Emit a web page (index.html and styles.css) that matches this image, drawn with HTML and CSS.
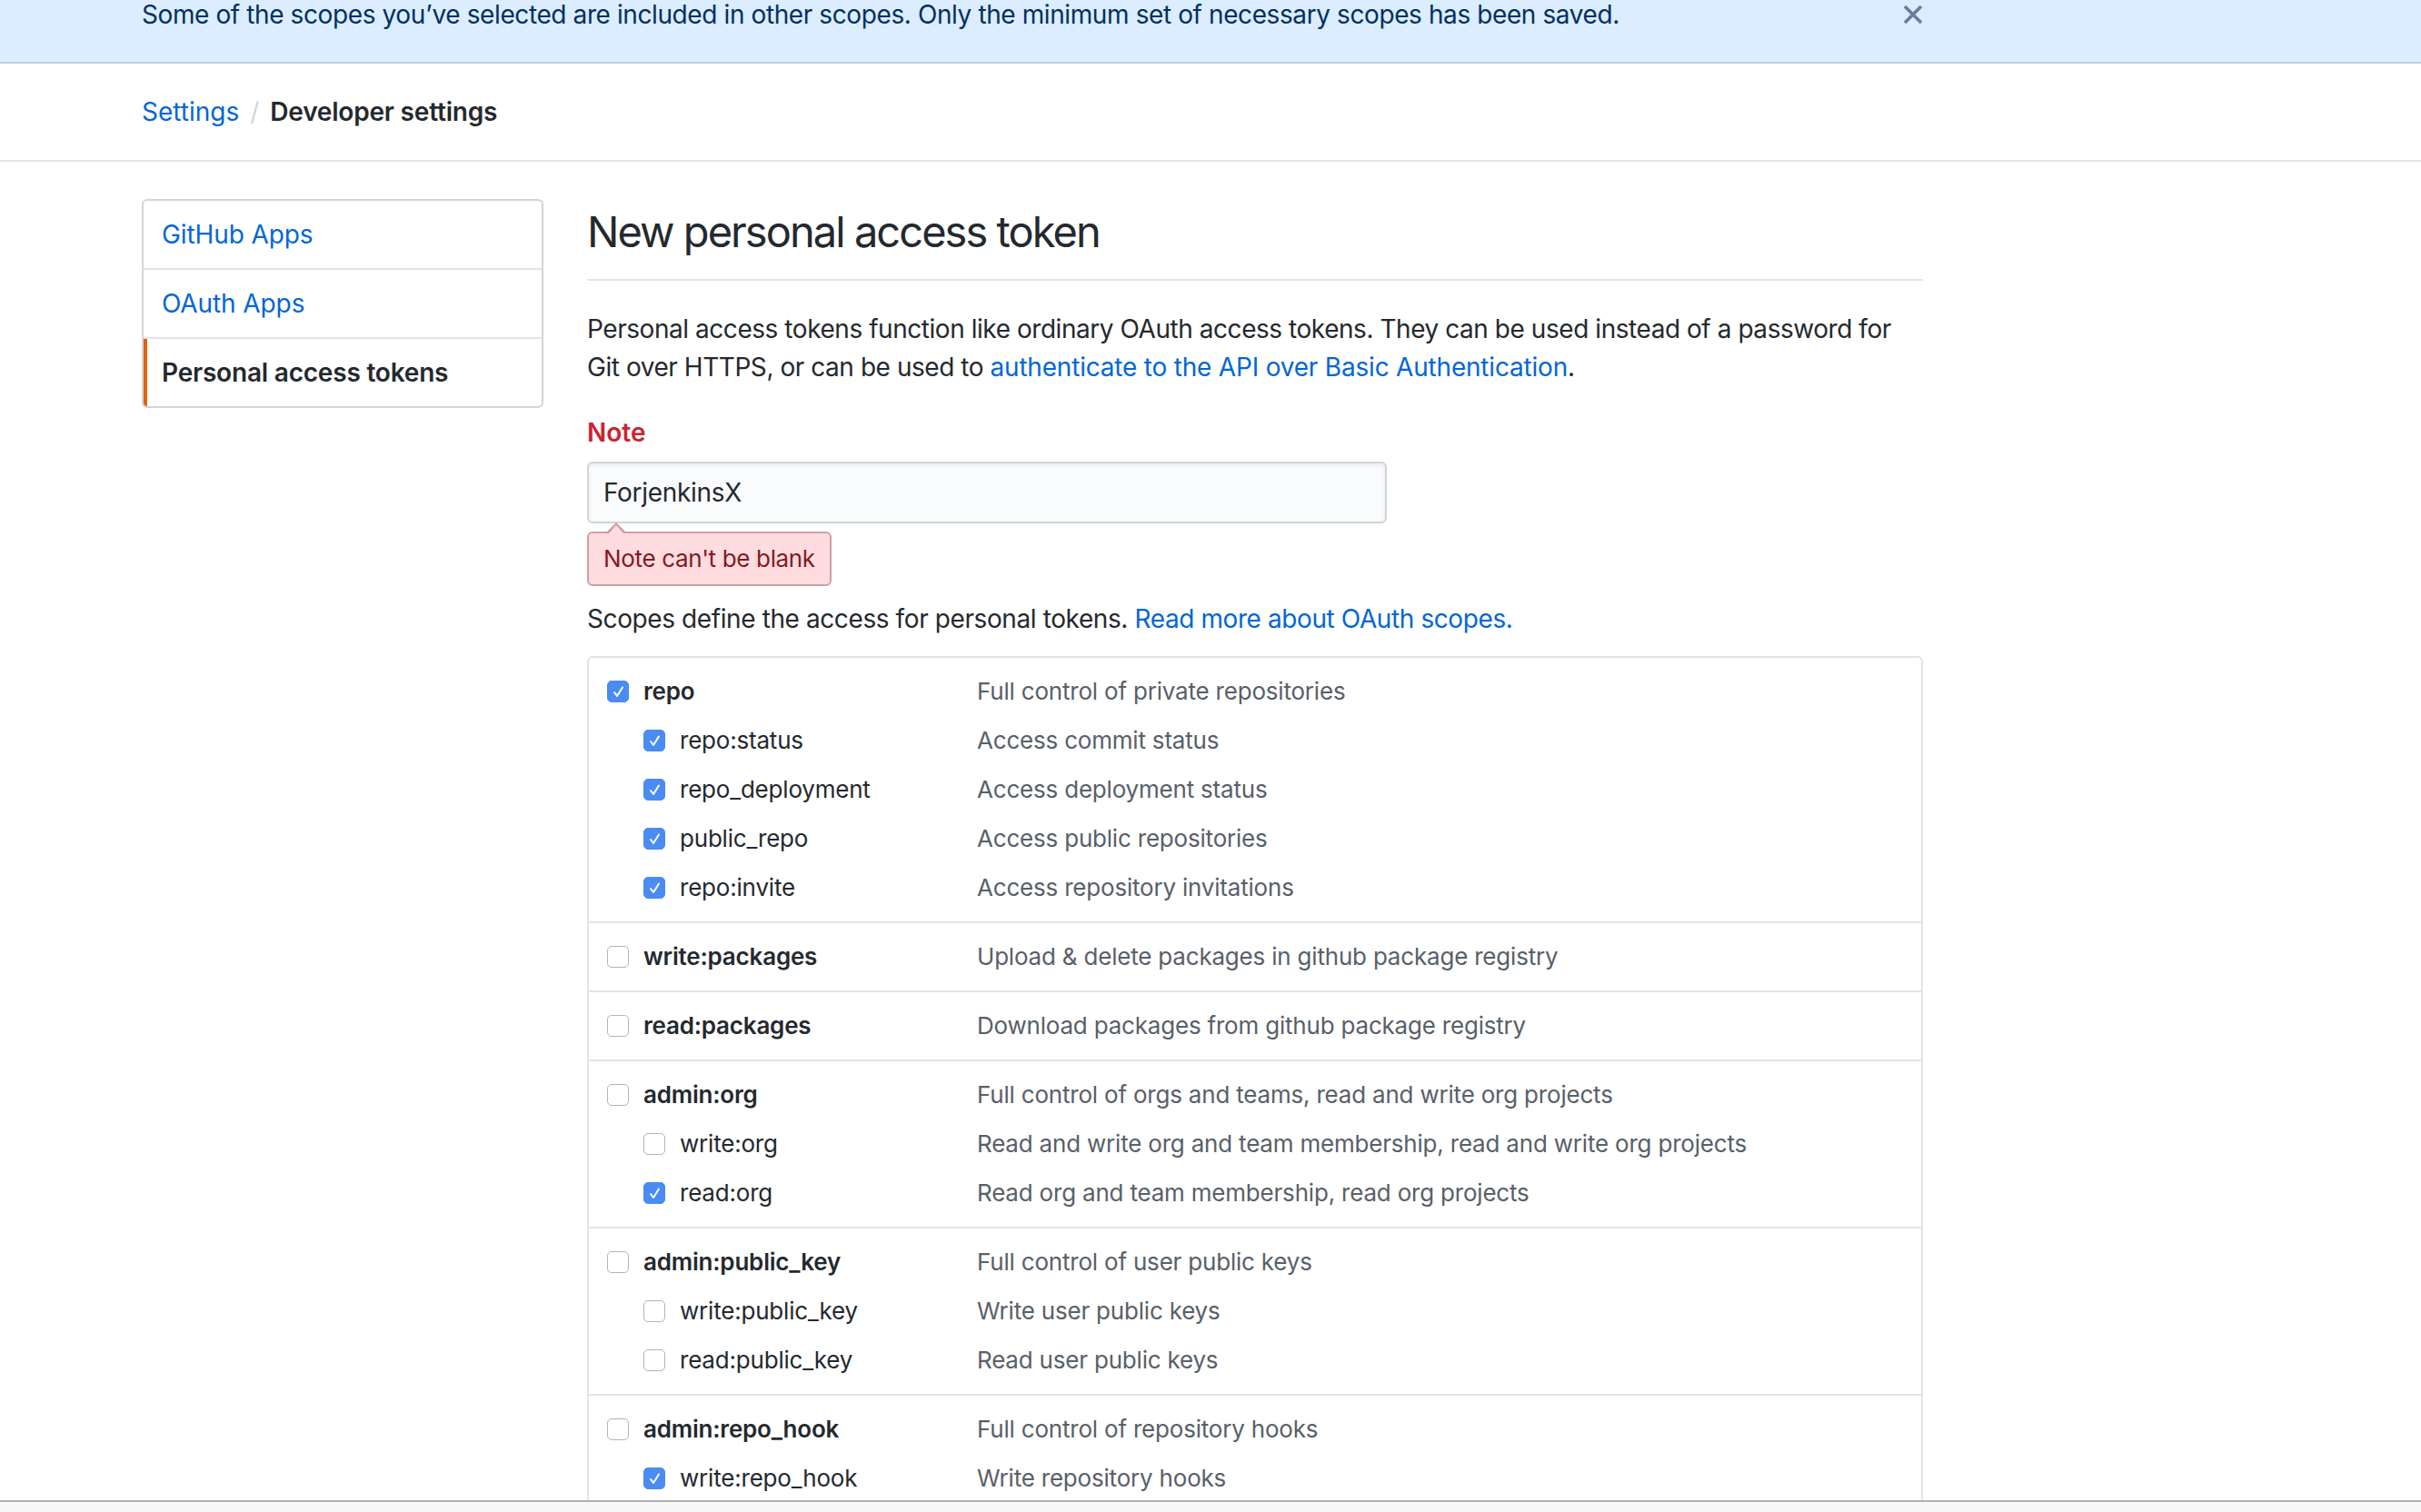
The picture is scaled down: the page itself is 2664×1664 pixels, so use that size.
FILE: index.html
```html
<!DOCTYPE html>
<html lang="en">
<head>
<meta charset="utf-8">
<title>New personal access token</title>
<link rel="stylesheet" href="styles.css">
</head>
<body>
<div class="flash">
  <div class="flash-inner">
    <span class="flash-text">Some of the scopes you’ve selected are included in other scopes. Only the minimum set of necessary scopes has been saved.</span>
    <svg class="flash-close" viewBox="0 0 22 20" width="22" height="20" aria-hidden="true"><path d="M2 1 L20 19 M20 1 L2 19" stroke="#687d9c" stroke-width="3.6" fill="none"/></svg>
  </div>
</div>

<div class="pagehead">
  <div class="container crumbs">
    <a href="#">Settings</a><span class="sep">/</span><strong>Developer settings</strong>
  </div>
</div>

<div class="container layout">
  <nav class="menu">
    <a class="menu-item" href="#">GitHub Apps</a>
    <a class="menu-item" href="#">OAuth Apps</a>
    <a class="menu-item selected" href="#">Personal access tokens</a>
  </nav>

  <main class="main">
    <h2 class="subhead">New personal access token</h2>
    <p class="intro">Personal access tokens function like ordinary OAuth access tokens. They can be used instead of a password for Git over HTTPS, or can be used to <a href="#">authenticate to the API over Basic Authentication</a>.</p>

    <label class="note-label">Note</label>
    <div class="note-input">ForjenkinsX</div>
    <div class="error">Note can't be blank</div>

    <p class="scopes-intro">Scopes define the access for personal tokens. <a href="#">Read more about OAuth scopes.</a></p>

    <div class="scopes">
      <div class="group">
        <div class="row"><div class="name top"><span class="cb on"><svg viewBox="0 0 23 23"><path d="M7 12 L10 16 L16 6.5"/></svg></span>repo</div><div class="desc">Full control of private repositories</div></div>
        <div class="row"><div class="name sub"><span class="cb on"><svg viewBox="0 0 23 23"><path d="M7 12 L10 16 L16 6.5"/></svg></span>repo:status</div><div class="desc">Access commit status</div></div>
        <div class="row"><div class="name sub"><span class="cb on"><svg viewBox="0 0 23 23"><path d="M7 12 L10 16 L16 6.5"/></svg></span>repo_deployment</div><div class="desc">Access deployment status</div></div>
        <div class="row"><div class="name sub"><span class="cb on"><svg viewBox="0 0 23 23"><path d="M7 12 L10 16 L16 6.5"/></svg></span>public_repo</div><div class="desc">Access public repositories</div></div>
        <div class="row"><div class="name sub"><span class="cb on"><svg viewBox="0 0 23 23"><path d="M7 12 L10 16 L16 6.5"/></svg></span>repo:invite</div><div class="desc">Access repository invitations</div></div>
      </div>
      <div class="group">
        <div class="row"><div class="name top"><span class="cb"></span>write:packages</div><div class="desc">Upload &amp; delete packages in github package registry</div></div>
      </div>
      <div class="group">
        <div class="row"><div class="name top"><span class="cb"></span>read:packages</div><div class="desc">Download packages from github package registry</div></div>
      </div>
      <div class="group">
        <div class="row"><div class="name top"><span class="cb"></span>admin:org</div><div class="desc">Full control of orgs and teams, read and write org projects</div></div>
        <div class="row"><div class="name sub"><span class="cb"></span>write:org</div><div class="desc">Read and write org and team membership, read and write org projects</div></div>
        <div class="row"><div class="name sub"><span class="cb on"><svg viewBox="0 0 23 23"><path d="M7 12 L10 16 L16 6.5"/></svg></span>read:org</div><div class="desc">Read org and team membership, read org projects</div></div>
      </div>
      <div class="group">
        <div class="row"><div class="name top"><span class="cb"></span>admin:public_key</div><div class="desc">Full control of user public keys</div></div>
        <div class="row"><div class="name sub"><span class="cb"></span>write:public_key</div><div class="desc">Write user public keys</div></div>
        <div class="row"><div class="name sub"><span class="cb"></span>read:public_key</div><div class="desc">Read user public keys</div></div>
      </div>
      <div class="group">
        <div class="row"><div class="name top"><span class="cb"></span>admin:repo_hook</div><div class="desc">Full control of repository hooks</div></div>
        <div class="row"><div class="name sub"><span class="cb on"><svg viewBox="0 0 23 23"><path d="M7 12 L10 16 L16 6.5"/></svg></span>write:repo_hook</div><div class="desc">Write repository hooks</div></div>
      </div>
    </div>
  </main>
</div>

<div class="bottom-bar"></div>
</body>
</html>
```

FILE: styles.css
```css
* { box-sizing: border-box; }
html, body { margin: 0; padding: 0; background: #fff; }
body {
  font-family: Inter, "Liberation Sans", Arial, sans-serif;
  font-size: 28px;
  line-height: 42px;
  color: #24292e;
  overflow: hidden;
  height: 1664px;
}
a { color: #0366d6; text-decoration: none; }
p { margin: 0; }

.container { width: 1960px; margin-left: 156px; }

/* flash banner */
.flash {
  height: 70px;
  background: #dbedff;
  border-bottom: 2px solid #c0cfe0;
}
.flash-inner {
  width: 1960px;
  margin-left: 156px;
  display: flex;
  justify-content: space-between;
  align-items: flex-start;
}
.flash-text { color: #032f62; line-height: 32px; letter-spacing: -0.4px; }
.flash-close { margin-top: 6px; display: block; }

/* breadcrumbs */
.pagehead {
  padding: 32px 0;
  border-bottom: 2px solid #e1e4e8;
}
.crumbs { display: flex; align-items: center; }
.crumbs .sep { color: #d1d5da; margin: 0 12px; }
.crumbs strong { font-weight: 600; color: #24292e; letter-spacing: -0.2px; }

/* layout */
.layout { display: flex; align-items: flex-start; margin-top: 41px; }

.menu {
  width: 442px;
  flex: none;
  border: 2px solid #d1d5da;
  border-radius: 6px;
  overflow: hidden;
}
.menu-item {
  position: relative;
  display: flex;
  align-items: center;
  height: 74px;
  padding: 0 20px;
  letter-spacing: -0.1px;
}
.menu-item + .menu-item { border-top: 2px solid #e1e4e8; height: 76px; }
.menu-item.selected { color: #24292e; font-weight: 600; letter-spacing: -0.2px; }
.menu-item.selected::before {
  content: "";
  position: absolute;
  left: 0; top: 0; bottom: 0;
  width: 4px;
  background: #e36209;
}

.main { width: 1470px; margin-left: 48px; }

.subhead {
  margin: 0 0 32px;
  font-size: 47px;
  line-height: 72px;
  font-weight: 400;
  letter-spacing: -1.95px;
  padding-bottom: 16px;
  border-bottom: 2px solid #e1e4e8;
}
.intro { margin-bottom: 30px; letter-spacing: -0.45px; }
.intro a { letter-spacing: -0.2px; }

.note-label {
  display: block;
  color: #cb2431;
  font-weight: 600;
  margin-bottom: 11px;
}
.note-input {
  width: 880px;
  height: 68px;
  padding: 0 16px;
  display: flex;
  align-items: center;
  background: #fafbfc;
  border: 2px solid #d1d5da;
  border-radius: 6px;
  box-shadow: inset 0 2px 4px rgba(27,31,35,0.075);
  letter-spacing: -0.3px;
}
.error {
  position: relative;
  display: inline-flex;
  align-items: center;
  margin-top: 9px;
  height: 60px;
  padding: 0 16px;
  background: #ffdce0;
  border: 2px solid #cea0a5;
  border-radius: 6px;
  color: #86181d;
  font-size: 26px;
  letter-spacing: -0.35px;
}
.error::before, .error::after {
  content: "";
  position: absolute;
  width: 0; height: 0;
  border-style: solid;
  border-color: transparent;
}
.error::before {
  left: 20px; top: -12px;
  border-width: 0 10px 10px 10px;
  border-bottom-color: #cea0a5;
}
.error::after {
  left: 22px; top: -9px;
  border-width: 0 8px 9px 8px;
  border-bottom-color: #ffdce0;
}

.scopes-intro { margin-top: 15px; letter-spacing: -0.4px; }

.scopes {
  margin-top: 20px;
  border: 2px solid #e1e4e8;
  border-radius: 6px;
  font-size: 26px;
  letter-spacing: -0.2px;
}
.group { padding: 10px 20px; }
.group + .group { border-top: 2px solid #e1e4e8; }
.row { display: flex; align-items: center; height: 54px; }
.name { width: 407px; flex: none; display: flex; align-items: center; }
.name.top { font-weight: 600; }
.name.sub { padding-left: 40px; }
.desc { color: #586069; }

.cb {
  width: 24px;
  height: 24px;
  flex: none;
  margin-right: 16px;
  border: 1.5px solid #b4b4b4;
  border-radius: 5px;
  background: #fff;
  display: flex;
  align-items: center;
  justify-content: center;
}
.cb.on { background: #4a8cf4; border-color: #4a8cf4; }
.cb svg { width: 23px; height: 23px; flex: none; }
.cb svg path { fill: none; stroke: #fff; stroke-width: 2; stroke-linecap: round; stroke-linejoin: round; }

.bottom-bar {
  position: fixed;
  left: 0; right: 0; bottom: 0;
  height: 13px;
  background: #f7f7f7;
  border-top: 2px solid #b0b0b0;
}
```
